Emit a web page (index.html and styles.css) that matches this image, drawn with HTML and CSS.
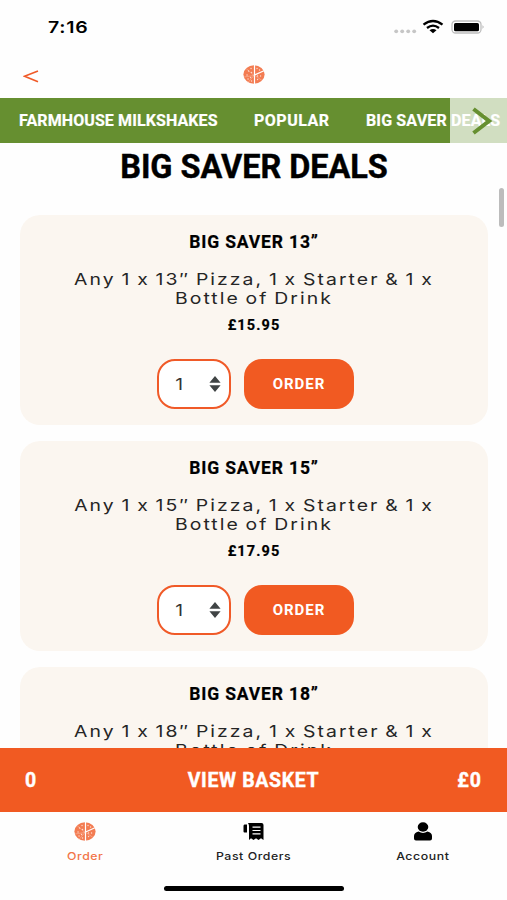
FILE: index.html
```html
<!DOCTYPE html>
<html lang="en">
<head>
<meta charset="utf-8">
<title>Big Saver Deals</title>
<link rel="stylesheet" href="styles.css">
</head>
<body>
<svg class="defs" width="0" height="0" aria-hidden="true">
  <symbol id="pizza" viewBox="0 0 22 19">
    <ellipse cx="11" cy="9.5" rx="10.6" ry="9.2" fill="#f37c52"/>
    <path d="M11.5 0V19M10.5 10.5L21.5 5.5" stroke="#fff" stroke-width="1.2"/>
    <path d="M11 10.5L3 3.5M11 10.5L1 12M11 10.5L5 17.5M12 10.5L19 15.5" stroke="#f9b89f" stroke-width=".6"/>
    <path d="M5.500 6h.1M8 3.500h.1M4 10h.1M7.500 12.500h.1M8.500 16h.1M14 3.500h.1M16.500 5h.1M14.500 14.500h.1M17.500 11h.1M14.500 11h.1M8.500 7.500h.1M5 14h.1" stroke="#ffd9ca" stroke-width="1.3" stroke-linecap="round"/>
  </symbol>
  <symbol id="sorter" viewBox="0 0 12 16">
    <path d="M6 0L11.600 6.700H.4ZM6 16L.4 9.300H11.600Z" fill="#404445"/>
  </symbol>
</svg>
<div class="phone">
  <div class="status">
    <span class="time">7:16</span>
    <span class="indicators">
      <svg width="24" height="18" viewBox="0 0 24 18" fill="#c6c6c6"><circle cx="2.200" cy="14.300" r="1.900"/><circle cx="8.200" cy="14.300" r="1.900"/><circle cx="14.200" cy="14.300" r="1.900"/><circle cx="20.200" cy="14.300" r="1.900"/></svg>
      <svg width="22" height="18" viewBox="0 0 22 18"><path d="M1.500 6.700Q11 -.7 20.500 6.700M5 10Q11 5.300 17 10" fill="none" stroke="#000" stroke-width="2.300"/><path d="M7.500 12.200Q11 9.600 14.500 12.200L11 15.300Z"/></svg>
      <svg width="34" height="18" viewBox="0 0 34 18"><rect x="1" y="3" width="29" height="12" rx="3.500" fill="#fff" stroke="#bdbdbd" stroke-width="1.300"/><rect x="3" y="4.900" width="25" height="8.400" rx="1.600"/><path d="M31.700 7q1.600 2 0 4z" fill="#888"/></svg>
    </span>
  </div>
  <header class="topbar">
    <svg class="back" width="16" height="13" viewBox="0 0 16 13"><path d="M15 1L1.500 6.300L15 11.800" fill="none" stroke="#f05a28" stroke-width="1.700"/></svg>
    <svg class="logo" width="22" height="19"><use href="#pizza"/></svg>
  </header>
  <nav class="categories">
    <a class="cat-farm">FARMHOUSE MILKSHAKES</a>
    <a class="cat-popular">POPULAR</a>
    <a class="cat-deals">BIG SAVER DEALS</a>
    <span class="more"><svg width="20" height="28" viewBox="0 0 20 28"><path d="M1.500 2L17 14L1.500 26" fill="none" stroke="#668f30" stroke-width="4"/></svg></span>
  </nav>
  <main class="content">
    <h1>BIG SAVER DEALS</h1>
    <article class="card">
      <h2>BIG SAVER 13”</h2>
      <p class="desc">Any 1 x 13″ Pizza, 1 x Starter &amp; 1 x<br>Bottle of Drink</p>
      <p class="price">£15.95</p>
      <div class="actions"><span class="qty"><span class="num">1</span><svg width="12" height="16"><use href="#sorter"/></svg></span><button>ORDER</button></div>
    </article>
    <article class="card">
      <h2>BIG SAVER 15”</h2>
      <p class="desc">Any 1 x 15″ Pizza, 1 x Starter &amp; 1 x<br>Bottle of Drink</p>
      <p class="price">£17.95</p>
      <div class="actions"><span class="qty"><span class="num">1</span><svg width="12" height="16"><use href="#sorter"/></svg></span><button>ORDER</button></div>
    </article>
    <article class="card">
      <h2>BIG SAVER 18”</h2>
      <p class="desc">Any 1 x 18″ Pizza, 1 x Starter &amp; 1 x<br>Bottle of Drink</p>
    </article>
    <span class="scrollbar"></span>
  </main>
  <div class="basket"><span>0</span><span class="view">VIEW BASKET</span><span class="total">£0</span></div>
  <footer class="tabs">
    <a class="tab active"><svg width="22" height="19"><use href="#pizza"/></svg><span>Order</span></a>
    <a class="tab"><svg width="22" height="19" viewBox="0 0 22 19"><path d="M1.500 2.500H4V10.500H1.500Q.5 10.500 .5 9.500V4Q.5 2.500 1.500 2.500ZM5 1H18.500Q20.500 1 20.500 3V18L18 16.300L15.500 18L13 16.300L10.500 18L8 16.300L6 18V4Q6 2.500 5 1Z"/><path d="M9.500 5.200H17.500M9.500 8.500H17.500M9.500 11.800H17.500" stroke="#fff" stroke-width="1.200"/></svg><span>Past Orders</span></a>
    <a class="tab"><svg width="22" height="19" viewBox="0 0 22 19"><ellipse cx="11" cy="5" rx="5.300" ry="4.700"/><path d="M6.500 9.500Q11 12.300 15.500 9.500Q20 10.500 20 14V16.500Q20 18.500 18 18.500H4Q2 18.500 2 16.500V14Q2 10.500 6.500 9.500Z"/></svg><span>Account</span></a>
  </footer>
  <div class="home"></div>
</div>
</body>
</html>
```
FILE: styles.css
```css
* { box-sizing: border-box; }
body { margin: 0; background: #fefefe; }
.defs { display: none; }
.phone { width: 507px; height: 900px; display: flex; flex-direction: column; overflow: hidden; font-family: Roboto, sans-serif; color: #000; }
.status { height: 54px; flex: none; display: flex; justify-content: space-between; padding: 17px 22px 0 48px; }
.time { font: 600 16.500px/21px Inter, sans-serif; letter-spacing: .6px; transform: scaleX(1.18); transform-origin: left; }
.indicators { display: flex; }
.indicators svg:nth-child(2) { margin: 1px 7px 0 4px; }
.indicators svg:nth-child(3) { margin-top: 1px; }
.topbar { height: 44px; flex: none; display: grid; grid-template-columns: 1fr 22px 1fr; padding: 11px 0 0; }
.back { margin: 5px 0 0 23px; }
.categories { position: relative; height: 45px; flex: none; display: flex; align-items: center; padding-left: 19px; background: #668f30; color: #fff; font-size: 16px; font-weight: 700; white-space: nowrap; -webkit-text-stroke: .2px; }
.cat-farm { width: 235px; letter-spacing: .1px; }
.cat-popular { width: 112px; letter-spacing: .5px; }
.cat-deals { letter-spacing: .15px; }
.more { position: absolute; top: 0; right: 0; width: 57px; height: 45px; display: flex; align-items: center; padding-left: 22px; background: rgba(255, 255, 255, .7); }
.content { position: relative; flex: 1; min-height: 0; overflow: hidden; text-align: center; padding: 0 19px 0 20px; }
h1, h2, p { margin: 0; font-weight: 700; }
h1 { height: 72px; font-size: 32.500px; line-height: 48px; letter-spacing: -.05px; -webkit-text-stroke: .4px; }
.card { height: 210px; margin-bottom: 16px; padding-top: 16px; border-radius: 20px; background: #fbf6f0; }
h2 { font-size: 17.500px; line-height: 22px; letter-spacing: .85px; -webkit-text-stroke: .2px; }
.desc { margin-top: 17px; font: 400 16.500px/19.300px Inter, sans-serif; letter-spacing: 1.750px; word-spacing: -1.500px; color: #252525; white-space: nowrap; transform: scaleX(1.175); }
.price { margin-top: 8px; font-size: 14.500px; line-height: 18px; letter-spacing: 1.100px; -webkit-text-stroke: .2px; }
.actions { display: flex; justify-content: center; gap: 13px; margin: 24px 0 0 3px; }
.qty { width: 74px; height: 50px; display: flex; align-items: center; justify-content: space-between; padding: 0 8px 0 17px; border: 2px solid #f05a28; border-radius: 18px; background: #fff; color: #333; font: 400 16px Inter, sans-serif; }
.num { transform: scaleX(1.2); }
button { width: 110px; height: 50px; padding: 0; border: 0; border-radius: 18px; background: #f15a22; color: #fff; font: 700 15px Roboto, sans-serif; letter-spacing: 1px; }
.scrollbar { position: absolute; right: 3px; top: 45px; width: 5px; height: 39px; border-radius: 3px; background: #bcbcbc; }
.basket { height: 64px; flex: none; display: grid; grid-template-columns: 1fr auto 1fr; align-items: center; padding: 0 25px; background: #f15a22; color: #fff; font-size: 19.500px; font-weight: 700; -webkit-text-stroke: .4px; }
.view { letter-spacing: .65px; }
.total { text-align: right; letter-spacing: 1px; }
.tabs { height: 76px; flex: none; display: grid; grid-template-columns: repeat(3, 1fr); }
.tab { display: flex; flex-direction: column; align-items: center; padding: 10px 0 0 1px; font: 500 11px/16px Inter, sans-serif; letter-spacing: .5px; }
.tab span { margin-top: 7px; color: #222; transform: scaleX(1.12); }
.tab.active span { color: #f27549; }
.home { width: 180px; height: 5px; flex: none; margin: -2px auto 9px; border-radius: 3px; background: #000; }
```
